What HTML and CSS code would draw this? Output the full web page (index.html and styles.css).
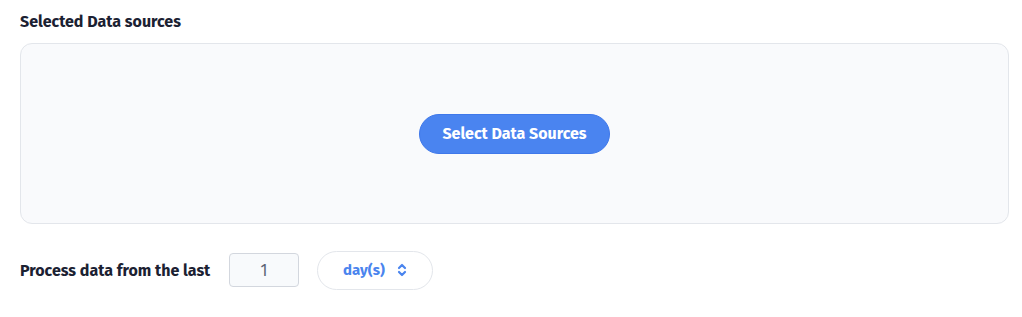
FILE: index.html
```html
<!DOCTYPE html>
<html>
<head>
<meta charset="utf-8">
<link rel="stylesheet" href="styles.css">
</head>
<body>
<div class="page">
  <div class="title">Selected Data sources</div>
  <div class="sources-box">
    <button class="primary-btn">Select Data Sources</button>
  </div>
  <div class="process-row">
    <span class="process-label">Process data from the last</span>
    <div class="num-input">1</div>
    <div class="unit-select">
      <span class="unit-text">day(s)</span>
      <svg class="chev" width="10" height="16" viewBox="0 0 10 16" fill="none" stroke="#4a84ee" stroke-width="2.2" stroke-linecap="round" stroke-linejoin="round">
        <path d="M2 6 L5 3 L8 6"/>
        <path d="M2 10 L5 13 L8 10"/>
      </svg>
    </div>
  </div>
</div>
</body>
</html>
```
FILE: styles.css
```css
html, body {
  margin: 0;
  padding: 0;
  background: #ffffff;
}
body {
  font-family: "Fira Sans", "Lato", "Noto Sans", sans-serif;
  color: #1b2132;
}
.page {
  padding: 13px 13px 0 20px;
  display: flex;
  flex-direction: column;
}
.title {
  font-weight: 700;
  font-size: 16px;
  line-height: 18px;
  height: 18px;
}
.sources-box {
  margin-top: 12px;
  height: 179px;
  background: #f9fafc;
  border: 1px solid #e3e6eb;
  border-radius: 12px;
  display: flex;
  align-items: center;
  justify-content: center;
}
.primary-btn {
  width: 191px;
  height: 40px;
  border: 1px solid #3f78ea;
  border-radius: 20px;
  background: #4a84f0;
  color: #ffffff;
  font-family: inherit;
  font-weight: 700;
  font-size: 16px;
  padding: 0;
  margin-top: 0;
}
.process-row {
  margin-top: 26px;
  display: flex;
  align-items: center;
  height: 40px;
}
.process-label {
  font-weight: 700;
  font-size: 16px;
  width: 209px;
}
.num-input {
  width: 68px;
  height: 32px;
  border: 1px solid #d3d7de;
  border-radius: 4px;
  background: #f8fafc;
  color: #5c6474;
  font-size: 16px;
  display: flex;
  align-items: center;
  justify-content: center;
}
.unit-select {
  margin-left: 18px;
  width: 114px;
  height: 37px;
  border: 1px solid #e3e6eb;
  border-radius: 20px;
  background: #ffffff;
  display: flex;
  align-items: center;
  justify-content: center;
  gap: 12px;
}
.unit-text {
  color: #4a84ee;
  font-weight: 700;
  font-size: 15px;
}
.chev {
  display: block;
}
```
